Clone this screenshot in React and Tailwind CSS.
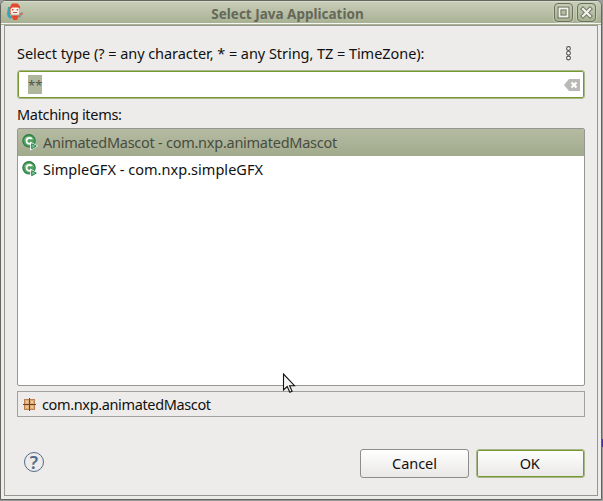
import React from "react";

function MascotIcon() {
  return (
    <svg width="18" height="18" viewBox="0 0 18 18" className="shrink-0">
      <path d="M2 4h3l-1 8 2 2-1 2-3-2-1-3z" fill="#35a3b4" />
      <path d="M12 14l3-5 2 1-3 5z" fill="#8898a0" />
      <path d="M5 12.5h8l-2 4.500H7.500z" fill="#e4492d" />
      <path d="M14 11l2.5-1.5 1 1.5-3 1z" fill="#dd6a50" />
      <path d="M6 .5h5.500l2.500 3v7.500H4V4z" fill="#e4492d" />
      <rect x="4.6" y="4.4" width="9" height="7" rx="2" fill="#f8f0ea" />
      <rect x="6" y="6" width="1.5" height="1.5" fill="#e4492d" />
      <rect x="10.7" y="6" width="1.5" height="1.5" fill="#e4492d" />
      <path d="M7 9.5h4.3" stroke="#a8594b" />
    </svg>
  );
}

function ClassIcon() {
  return (
    <svg width="17" height="17" viewBox="0 0 17 17" className="shrink-0">
      <circle cx="7" cy="6.8" r="6.2" fill="#4aa05c" stroke="#2b7a49" strokeWidth="1.1" />
      <path d="M2.200 6a5 5 0 0 1 9.600 0q-5-2-9.600 0" fill="#86c483" />
      <path d="M9.6 5a2.9 2.9 0 1 0 0 3.8" fill="none" stroke="#fff" strokeWidth="1.9" />
      <path d="M8.2 7.500l8 4.500-8 4.500z" fill="#fff" />
      <path d="M9.7 9.700l4.600 2.400-4.600 2.600z" fill="#7cc795" stroke="#237e48" />
    </svg>
  );
}

function PackageIcon() {
  return (
    <svg width="13" height="13" viewBox="0 0 13 13" className="shrink-0">
      <rect x="1.5" y="1.5" width="10" height="10" fill="#dcae78" stroke="#bd8052" />
      <path d="M3 3h2v2H3zM8 3h2v2H8zM3 8h2v2H3zM8 8h2v2H8z" fill="#edc896" />
      <path d="M6.5 0v13M0 6.5h13" stroke="#7a3e26" />
    </svg>
  );
}

function TitleButton({ close }) {
  return (
    <button className="h-[19px] w-[19px] rounded-[4px] border border-[#6c715f] bg-linear-to-b from-[#c5ccb4] to-[#a9b193] shadow-[0_0_0_1px_#c7ceb8]">
      <svg width="17" height="17" viewBox="0 0 17 17">
        {close ? (
          <>
            <path d="M5 5l7 7m0-7l-7 7" stroke="#747a67" strokeWidth="4.2" strokeLinecap="square" />
            <path d="M5 5l7 7m0-7l-7 7" stroke="#f1f2ec" strokeWidth="2.2" strokeLinecap="square" />
          </>
        ) : (
          <>
            <rect x="4.5" y="4.5" width="8" height="8" fill="none" stroke="#747a67" strokeWidth="4" />
            <rect x="4.5" y="4.5" width="8" height="8" fill="none" stroke="#f1f2ec" strokeWidth="1.8" />
          </>
        )}
      </svg>
    </button>
  );
}

export default function App() {
  return (
    <div className="relative h-[501px] w-[603px] overflow-hidden bg-[#9b9b9b] font-['Noto_Sans',sans-serif] text-[14.5px] leading-[20px] text-[#111]">
      <div className="flex h-[500px] w-[602px] flex-col overflow-hidden rounded-t-[6px] border border-[#65655f] bg-[#edecea]">
        <header className="flex h-[23px] shrink-0 items-center border-b border-[#f5f6f0] bg-linear-to-b from-[#c9cfba] to-[#a9b193] pr-[5px] pl-[5px] shadow-[inset_0_1px_0_#d7dccb]">
          <MascotIcon />
          <h1 className="grow pt-[3px] pr-[3px] text-center text-[13.5px] font-bold whitespace-nowrap text-[#656859]">
            Select Java Application
          </h1>
          <div className="flex gap-1">
            <TitleButton />
            <TitleButton close />
          </div>
        </header>
        <div className="h-px shrink-0 bg-[#a9b193]" />
        <main className="mx-[3px] mb-[3px] flex grow flex-col border border-[#969693] px-3">
          <div className="mt-[18px] flex h-[20px] items-center justify-between pr-[13px]">
            <label className="pb-[2px] tracking-[-0.05px] whitespace-nowrap">Select type (? = any character, * = any String, TZ = TimeZone):</label>
            <svg width="7" height="16" viewBox="0 0 7 16" fill="#fff" stroke="#555" strokeWidth="1.1">
              <circle cx="3.5" cy="2.5" r="1.9" />
              <circle cx="3.5" cy="7.2" r="1.9" />
              <circle cx="3.5" cy="12" r="1.9" />
            </svg>
          </div>
          <div className="mt-[6px] flex h-[29px] w-[568px] shrink-0 items-center justify-between rounded-[3px] border border-[#a9b58b] bg-white pr-[3px] pl-[10px] shadow-[inset_0_0_0_1px_#75992f]">
            <span className="flex h-[19px] w-[14px] items-center bg-[#aeb69c] text-[13px] text-[#505548]">**</span>
            <svg width="17" height="12" viewBox="0 0 17 12">
              <path d="M0 6l5-6h11v12H5z" fill="#b9bab6" />
              <path d="M7.5 3.5l5 5m0-5l-5 5" stroke="#fff" strokeWidth="2.2" />
            </svg>
          </div>
          <div className="mt-[6px] h-[20px] leading-[18px] tracking-[-0.32px]">Matching items:</div>
          <div className="mt-[3px] h-[258px] w-[568px] shrink-0 rounded-[2px] border border-[#969693] bg-white">
            <div className="flex h-[27px] items-center gap-[4px] bg-linear-to-b from-[#b4bba2] to-[#a2aa8d] pl-1 text-[#484c40]">
              <ClassIcon />
              <span className="pb-[2px] tracking-[-0.26px]">AnimatedMascot - com.nxp.animatedMascot</span>
            </div>
            <div className="flex h-[27px] items-center gap-[4px] pl-1">
              <ClassIcon />
              <span className="pb-[2px] tracking-[0.03px]">SimpleGFX - com.nxp.simpleGFX</span>
            </div>
          </div>
          <div className="mt-[5px] flex h-[26px] w-[568px] shrink-0 items-center gap-[6px] border border-[#a1a19e] pl-[5px]">
            <PackageIcon />
            <span className="tracking-[-0.36px]">com.nxp.animatedMascot</span>
          </div>
          <footer className="mt-[32px] flex h-[29px] w-[568px] shrink-0 items-center">
            <span className="mb-[3px] ml-[7px] flex h-[20px] w-[20px] items-center justify-center rounded-full border border-[#536b8b] text-[18px] font-semibold text-[#536b8b]">?</span>
            <button className="mr-[7px] ml-auto h-[29px] w-[109px] rounded-[3px] border border-[#8d8d8a] bg-linear-to-b from-white to-[#e9e8e6] pb-[2px] tracking-[-0.05px]">Cancel</button>
            <button className="h-[29px] w-[109px] rounded-[3px] border border-[#a9b58b] bg-linear-to-b from-white to-[#e9e8e6] pr-[2px] pb-[2px] tracking-[-0.5px] shadow-[inset_0_0_0_1px_#75992f]">OK</button>
          </footer>
        </main>
      </div>
      <div className="absolute top-[439px] left-[602px] h-[8px] w-px bg-[#4b2c9b]" />
      <svg className="absolute top-[373px] left-[282px]" width="14" height="21" viewBox="0 0 14 21">
        <path d="M1.5 1v16l3.7-3.5 2.6 5.8 2.3-1-2.5-5.6h4.9z" fill="#f5f5f5" stroke="#111" strokeWidth="1.1" />
      </svg>
    </div>
  );
}
